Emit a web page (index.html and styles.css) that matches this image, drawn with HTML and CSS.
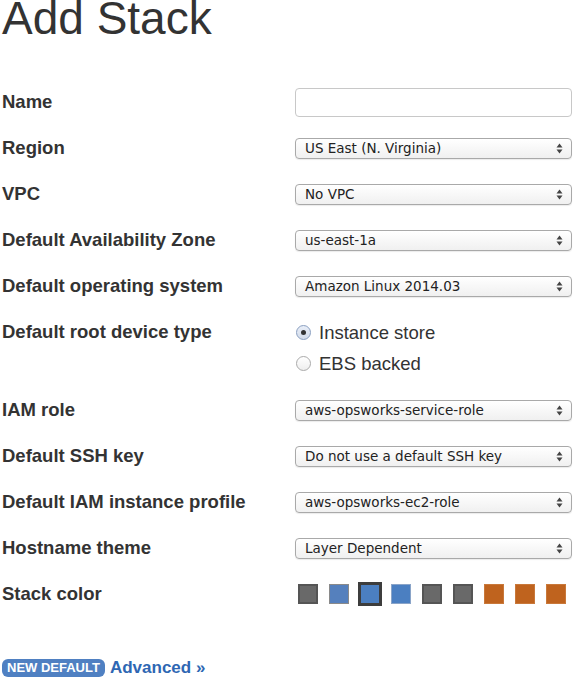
FILE: index.html
```html
<!DOCTYPE html>
<html>
<head>
<meta charset="utf-8">
<link rel="stylesheet" href="styles.css">
</head>
<body>
<h1 class="title">Add Stack</h1>
<div class="form">
  <div class="row">
    <div class="label">Name</div>
    <div class="field"><div class="text-input"></div></div>
  </div>
  <div class="row">
    <div class="label">Region</div>
    <div class="field"><div class="select"><span>US East (N. Virginia)</span><svg class="arrows" width="7" height="11" viewBox="0 0 7 11"><path d="M3.5 0.5 L6.5 4.5 L0.5 4.5 Z M3.5 10.5 L6.5 6.5 L0.5 6.5 Z" fill="#444"/></svg></div></div>
  </div>
  <div class="row">
    <div class="label">VPC</div>
    <div class="field"><div class="select"><span>No VPC</span><svg class="arrows" width="7" height="11" viewBox="0 0 7 11"><path d="M3.5 0.5 L6.5 4.5 L0.5 4.5 Z M3.5 10.5 L6.5 6.5 L0.5 6.5 Z" fill="#444"/></svg></div></div>
  </div>
  <div class="row">
    <div class="label">Default Availability Zone</div>
    <div class="field"><div class="select"><span>us-east-1a</span><svg class="arrows" width="7" height="11" viewBox="0 0 7 11"><path d="M3.5 0.5 L6.5 4.5 L0.5 4.5 Z M3.5 10.5 L6.5 6.5 L0.5 6.5 Z" fill="#444"/></svg></div></div>
  </div>
  <div class="row">
    <div class="label">Default operating system</div>
    <div class="field"><div class="select"><span>Amazon Linux 2014.03</span><svg class="arrows" width="7" height="11" viewBox="0 0 7 11"><path d="M3.5 0.5 L6.5 4.5 L0.5 4.5 Z M3.5 10.5 L6.5 6.5 L0.5 6.5 Z" fill="#444"/></svg></div></div>
  </div>
  <div class="row row-radio">
    <div class="label">Default root device type</div>
    <div class="radios">
      <div class="radio-opt"><span class="radio checked"></span><span>Instance store</span></div>
      <div class="radio-opt"><span class="radio"></span><span>EBS backed</span></div>
    </div>
  </div>
  <div class="row">
    <div class="label">IAM role</div>
    <div class="field"><div class="select"><span>aws-opsworks-service-role</span><svg class="arrows" width="7" height="11" viewBox="0 0 7 11"><path d="M3.5 0.5 L6.5 4.5 L0.5 4.5 Z M3.5 10.5 L6.5 6.5 L0.5 6.5 Z" fill="#444"/></svg></div></div>
  </div>
  <div class="row">
    <div class="label">Default SSH key</div>
    <div class="field"><div class="select"><span>Do not use a default SSH key</span><svg class="arrows" width="7" height="11" viewBox="0 0 7 11"><path d="M3.5 0.5 L6.5 4.5 L0.5 4.5 Z M3.5 10.5 L6.5 6.5 L0.5 6.5 Z" fill="#444"/></svg></div></div>
  </div>
  <div class="row">
    <div class="label">Default IAM instance profile</div>
    <div class="field"><div class="select"><span>aws-opsworks-ec2-role</span><svg class="arrows" width="7" height="11" viewBox="0 0 7 11"><path d="M3.5 0.5 L6.5 4.5 L0.5 4.5 Z M3.5 10.5 L6.5 6.5 L0.5 6.5 Z" fill="#444"/></svg></div></div>
  </div>
  <div class="row">
    <div class="label">Hostname theme</div>
    <div class="field"><div class="select"><span>Layer Dependent</span><svg class="arrows" width="7" height="11" viewBox="0 0 7 11"><path d="M3.5 0.5 L6.5 4.5 L0.5 4.5 Z M3.5 10.5 L6.5 6.5 L0.5 6.5 Z" fill="#444"/></svg></div></div>
  </div>
  <div class="row">
    <div class="label">Stack color</div>
    <div class="swatches">
      <span class="sw gray-dark"></span>
      <span class="sw blue-light"></span>
      <span class="sw blue selected"></span>
      <span class="sw blue"></span>
      <span class="sw gray-dark"></span>
      <span class="sw gray-dark"></span>
      <span class="sw orange"></span>
      <span class="sw orange"></span>
      <span class="sw orange"></span>
    </div>
  </div>
</div>
<div class="footer">
  <span class="badge">NEW DEFAULT</span>
  <a class="advanced">Advanced »</a>
</div>
</body>
</html>
```
FILE: styles.css
```css
* { box-sizing: border-box; }
body {
  margin: 0;
  padding: 0 0 0 2px;
  font-family: "Liberation Sans", Arial, sans-serif;
  color: #333;
  background: #fff;
}
.title {
  margin: -5px 0 0 0;
  font-size: 46px;
  line-height: 46px;
  font-weight: normal;
  color: #333;
  height: 73px;
}
.form {
  display: flex;
  flex-direction: column;
  margin-top: 11px;
}
.row {
  display: grid;
  grid-template-columns: 293px 277px;
  align-items: center;
  height: 46px;
}
.label {
  font-weight: bold;
  font-size: 18.5px;
  color: #333;
  line-height: 46px;
}
.text-input {
  height: 29px;
  border: 1px solid #c8c8c8;
  border-radius: 4px;
  background: #fff;
}
.select {
  height: 21px;
  border: 1px solid #a9a9a9;
  border-radius: 4px;
  background: linear-gradient(#ffffff, #f0f0f0);
  display: flex;
  align-items: center;
  justify-content: space-between;
  padding: 0 8px 0 9px;
  font-family: "DejaVu Sans", Verdana, sans-serif;
  font-size: 13.5px;
  color: #222;
  box-shadow: 0 1px 1px rgba(0,0,0,0.08);
}
.arrows { display: block; }
.row-radio {
  height: 78px;
  align-items: start;
}
.row-radio .label { line-height: 46px; }
.radios {
  display: flex;
  flex-direction: column;
  padding-top: 8px;
  margin-left: 1px;
}
.radio-opt {
  display: flex;
  align-items: center;
  gap: 8px;
  height: 31px;
  font-size: 18.5px;
  color: #333;
}
.radio {
  width: 15px;
  height: 15px;
  border: 1px solid #aaa;
  border-radius: 50%;
  background: linear-gradient(#fff, #eee);
  display: flex;
  align-items: center;
  justify-content: center;
}
.radio.checked {
  border-color: #8a9fc0;
  background: linear-gradient(#e8eef8, #d4dcea);
}
.radio.checked::after {
  content: "";
  width: 5px;
  height: 5px;
  border-radius: 50%;
  background: #333;
}
.swatches {
  display: flex;
  align-items: center;
  gap: 11px;
  padding-left: 3px;
}
.sw {
  width: 20px;
  height: 20px;
  display: block;
  border: 1px solid #999;
}
.gray-dark { background: #696969; border: 2px solid #555; }
.blue-light { background: #5580bd; border: 1px solid #8a8a8a; }
.blue { background: #4b7fc1; border: 1px solid #8aa4c8; }
.blue.selected {
  width: 24px;
  height: 24px;
  border: 3px solid #3d3d3d;
  margin: 0 -2px;
}
.orange { background: #bf631e; border: 1px solid #c9783a; }
.footer {
  display: flex;
  align-items: center;
  gap: 5px;
  margin-top: 41px;
}
.badge {
  background: #4f80c2;
  color: #fff;
  font-weight: bold;
  font-size: 13px;
  height: 18px;
  line-height: 18px;
  padding: 0 5px;
  border-radius: 6px;
  margin-left: 0;
}
.advanced {
  color: #2e67b3;
  font-weight: bold;
  font-size: 17px;
  text-decoration: none;
}
```
